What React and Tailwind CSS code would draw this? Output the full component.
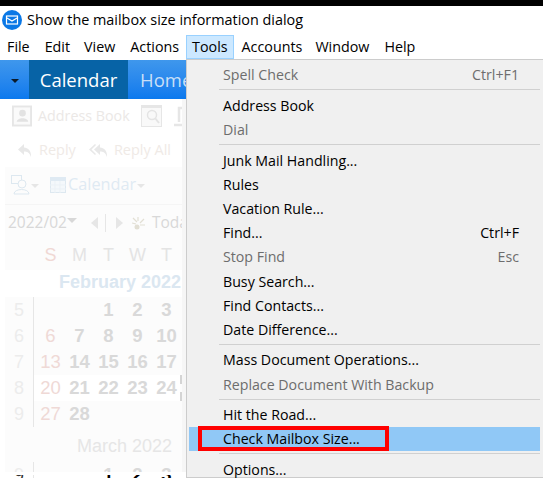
import React from "react";

function Row({ label, shortcut, disabled, highlight, boxed }) {
  return (
    <div className={"relative mr-[3px] flex h-[24.1px] items-center justify-between pl-[34px] pr-[21px] text-[14.2px] " + (disabled ? "text-[#6d6d6d] " : "text-black ") + (highlight ? "bg-[#90c8f6]" : "")}>
      <span>{label}</span>
      {shortcut && <span>{shortcut}</span>}
      {boxed && <div className="absolute left-[9px] top-[-1px] h-[25px] w-[191px] border-4 border-[#ff0000]" />}
    </div>
  );
}

function Sep() {
  return <div className="ml-[30px] mr-[3px] mt-[2.3px] mb-[3.4px] h-px bg-[#d0d0d0]" />;
}

function Menu() {
  return (
    <div className="absolute left-[186px] top-[59px] h-[419px] w-[358px] border border-[#cccccc] bg-[#f0f0f0] pl-[2px] pt-[3px]">
      <Row label="Spell Check" shortcut="Ctrl+F1" disabled />
      <Sep />
      <Row label="Address Book" />
      <Row label="Dial" disabled />
      <Sep />
      <Row label="Junk Mail Handling..." />
      <Row label="Rules" />
      <Row label="Vacation Rule..." />
      <Row label="Find..." shortcut="Ctrl+F" />
      <Row label="Stop Find" shortcut="Esc" disabled />
      <Row label="Busy Search..." />
      <Row label="Find Contacts..." />
      <Row label="Date Difference..." />
      <Sep />
      <Row label="Mass Document Operations..." />
      <Row label="Replace Document With Backup" disabled />
      <Sep />
      <Row label="Hit the Road..." />
      <Row label="Check Mailbox Size..." highlight boxed />
      <Sep />
      <Row label="Options..." />
    </div>
  );
}

function DayRow({ week, cells, light, weekColor = "text-[#ececec]", dayColor = "text-[#d9d9d9]", sunColor = "text-[#efd9d6]" }) {
  return (
    <div className="relative flex h-[26px] items-stretch">
      <span className={"flex w-[29px] items-center justify-center border-r border-[#e6e6e6] text-[18px] " + weekColor}>{week}</span>
      <div className={"flex w-[146px] items-center pl-[2px] " + (light ? "bg-white" : "")}>
        {cells.map((c, i) => (
          <span key={i} className={"w-[29px] shrink-0 text-center text-[18.5px] " + (i === 0 ? "font-normal " + sunColor : "font-bold " + dayColor)}>{c}</span>
        ))}
      </div>
      {light && <div className="absolute left-[175px] top-0 h-[9px] w-[2px] bg-[#d4d4d4]" />}
      {light && <div className="absolute left-[175px] bottom-0 h-[9px] w-[2px] bg-[#d4d4d4]" />}
    </div>
  );
}

export default function App() {
  return (
    <div className="relative h-[478px] w-[543px] overflow-hidden bg-white font-['Open_Sans','Noto_Sans',sans-serif] text-black">
      <div className="h-[6px] bg-black" />
      <div className="flex h-[28px] items-center gap-[5px] pl-[2px] text-[14.4px]">
        <svg width="20" height="20" viewBox="0 0 20 20">
          <circle cx="10" cy="10" r="10" fill="#0a78e6" />
          <rect x="4.5" y="6" width="11" height="8" fill="none" stroke="#fff" strokeWidth="1.2" />
          <path d="M5 8 L10 11 L15 8" fill="none" stroke="#fff" strokeWidth="1.2" />
        </svg>
        <span>Show the mailbox size information dialog</span>
      </div>
      <div className="flex h-[26px] items-center text-[14.3px]">
        <span className="pl-[7px] pr-[8px]">File</span>
        <span className="px-[7px]">Edit</span>
        <span className="pl-[7px] pr-[8px]">View</span>
        <span className="pl-[7px]">Actions</span>
        <span className="ml-[7px] flex h-[24px] items-center border border-[#99d1ff] bg-[#cce8ff] px-[5px]">Tools</span>
        <span className="pl-[8px] pr-[6px]">Accounts</span>
        <span className="pl-[7px] pr-[8px]">Window</span>
        <span className="px-[7px]">Help</span>
      </div>
      <div className="flex h-[39px] items-stretch bg-gradient-to-b from-[#3f97ec] to-[#0a79ee] pt-[1px] text-[18.5px]">
        <div className="flex w-[29px] items-center justify-center">
          <div className="mt-[2px] h-0 w-0 border-x-[4px] border-t-[4px] border-x-transparent border-t-[#0b1a2a]" />
        </div>
        <div className="-mt-[1px] flex w-[99px] items-center justify-center bg-[#0763a6] text-white">Calendar</div>
        <div className="flex items-center pl-[12px] text-[#c9dff7]">Home</div>
      </div>
      <div className="h-[373px] w-[187px] bg-[#f6f6f6] pr-[5px]">
        <div className="h-full overflow-hidden bg-white text-[14.5px]">
          <div className="flex h-[34px] items-center gap-[6px] pl-[12px] text-[14.3px] text-[#ebe8e6]">
            <svg width="20" height="22" viewBox="0 0 21 22" className="shrink-0">
              <rect x="1" y="1" width="19" height="20" fill="#fafafa" stroke="#e6e6e6" strokeWidth="2" />
              <circle cx="11" cy="8" r="3.5" fill="#e2e2e2" />
              <path d="M5 17 C5 12 17 12 17 17Z" fill="#e2e2e2" />
            </svg>
            <span className="whitespace-nowrap">Address Book</span>
            <svg width="21" height="22" viewBox="0 0 21 22" className="ml-[5px] shrink-0">
              <rect x="0.5" y="0.5" width="20" height="21" fill="#f9f9f9" stroke="#e6e6e6" />
              <rect x="0" y="0" width="21" height="3" fill="#e6e6e6" />
              <circle cx="11" cy="10" r="4.5" fill="none" stroke="#e4e4e4" strokeWidth="1.5" />
              <path d="M14 13 L18 18" stroke="#e4e4e4" strokeWidth="2" />
            </svg>
            <svg width="9" height="22" viewBox="0 0 9 22" className="ml-[6px] shrink-0">
              <path d="M0 20 H9 M5 17 V3 H9" stroke="#e6e6e6" strokeWidth="2.5" fill="none" />
            </svg>
          </div>
          <div className="flex h-[34px] items-center pl-[17px] text-[#efeae6]">
            <svg width="16" height="15" viewBox="0 0 16 15" className="shrink-0">
              <path d="M7 1 L1 6.5 L7 12 V8.5 C10 8.5 12.5 9.5 14 14 C14.5 8 11 4.5 7 4.5Z" fill="#e8e8e8" />
            </svg>
            <span className="ml-[6px]">Reply</span>
            <svg width="21" height="15" viewBox="0 0 21 15" className="ml-[12px] shrink-0">
              <path d="M12 1 L6 6.5 L12 12 V8.5 C15 8.5 17.5 9.5 19 14 C19.5 8 16 4.5 12 4.5Z M7 1 L1 6.5 L7 12 L8 11 L3.5 6.5 L8 2Z" fill="#e8e8e8" />
            </svg>
            <span className="ml-[5px] whitespace-nowrap">Reply All</span>
          </div>
          <div className="ml-[5px] flex h-[38px] items-center border-b border-[#f5f5f5] bg-[#fcfcfc] pb-[2px] pl-[6px] text-[16.3px] text-[#dfeaf3]">
            <svg width="19" height="20" viewBox="0 0 19 20" className="shrink-0">
              <rect x="0.5" y="0.5" width="10" height="8" fill="none" stroke="#dde8f0" />
              <circle cx="11" cy="9" r="4" fill="#fcfcfc" stroke="#dde8f0" />
              <path d="M3 19 C3 13 18 13 18 19Z" fill="none" stroke="#dde8f0" />
            </svg>
            <div className="ml-[1px] mt-[2px] h-0 w-0 shrink-0 border-x-[4px] border-t-[4px] border-x-transparent border-t-[#e6e6e6]" />
            <svg width="16" height="16" viewBox="0 0 16 16" className="ml-[11px] mr-[2px] shrink-0">
              <rect x="0.5" y="0.5" width="15" height="15" fill="#f4f8fb" stroke="#dde8f0" />
              <rect x="0" y="0" width="16" height="4" fill="#dfeaf3" />
              <path d="M0 8 H16 M0 12 H16 M5 4 V16 M10 4 V16" stroke="#ebf1f6" />
            </svg>
            <span>Calendar</span>
            <div className="ml-[1px] mt-[2px] h-0 w-0 shrink-0 border-x-[4px] border-t-[4px] border-x-transparent border-t-[#e6e6e6]" />
          </div>
          <div className="ml-[5px] flex h-[36px] items-center bg-[#fcfcfc] pl-[3px] text-[15.5px] text-[#d8d8d8]">
            <span className="w-[60px] shrink-0 overflow-hidden whitespace-nowrap">2022/02</span>
            <div className="mt-[-5px] -ml-[1px] h-0 w-0 shrink-0 border-x-[5px] border-t-[5px] border-x-transparent border-t-[#d8d8d8]" />
            <div className="ml-[14px] h-0 w-0 shrink-0 border-y-[6px] border-r-[7px] border-y-transparent border-r-[#e6e6e6]" />
            <div className="ml-[7px] h-[18px] w-px shrink-0 bg-[#e6e6e6]" />
            <div className="ml-[10px] h-0 w-0 shrink-0 border-y-[6px] border-l-[7px] border-y-transparent border-l-[#e6e6e6]" />
            <svg width="13" height="13" viewBox="0 0 13 13" className="ml-[9px] shrink-0">
              <path d="M1 1 L5 5 M6 0 V4 M12 2 L8 6 M0 6 L4 7 M8 8 H13" stroke="#e2dfd4" strokeWidth="1.2" />
              <circle cx="5" cy="10" r="2.5" fill="#e2dfd4" />
            </svg>
            <span className="ml-[7px] whitespace-nowrap">Today</span>
          </div>
          <div className="ml-[5px] font-['Liberation_Sans',sans-serif]">
            <div className="flex h-[29px] items-center bg-[#fcfcfc] pl-[31px] text-[18px] text-[#e4e4e4]">
              <span className="w-[29px] shrink-0 text-center text-[#f0d8d4]">S</span>
              <span className="w-[29px] shrink-0 text-center">M</span>
              <span className="w-[29px] shrink-0 text-center">T</span>
              <span className="w-[29px] shrink-0 text-center">W</span>
              <span className="w-[29px] shrink-0 text-center">T</span>
            </div>
            <div className="flex h-[27px] items-center overflow-hidden whitespace-nowrap pb-[3px] pl-[54px] text-[18px] font-bold text-[#dbe7f1]">February 2022</div>
            <div className="bg-[#fcfcfc]">
              <DayRow week="5" cells={["", "", "1", "2", "3"]} />
              <DayRow week="6" cells={["6", "7", "8", "9", "10"]} />
              <DayRow week="7" cells={["13", "14", "15", "16", "17"]} />
              <DayRow week="8" cells={["20", "21", "22", "23", "24"]} light />
              <DayRow week="9" cells={["27", "28", "", "", ""]} />
              <div className="flex h-[35px] items-center whitespace-nowrap pl-[72px] pt-[3px] text-[18px] text-[#e6e6e6]">March 2022</div>
              <div className="h-[10px] overflow-hidden">
                <DayRow week="9" cells={["", "", "1", "2", "3"]} />
              </div>
            </div>
          </div>
        </div>
      </div>
      <div className="mt-[3px] ml-[5px] h-[3px] w-[177px] overflow-hidden font-['Liberation_Sans',sans-serif]">
        <div className="-mt-[13px]">
          <DayRow week="9" cells={["", "", "1", "2", "3"]} weekColor="text-[#333333]" dayColor="text-black" />
        </div>
      </div>
      <Menu />
    </div>
  );
}
